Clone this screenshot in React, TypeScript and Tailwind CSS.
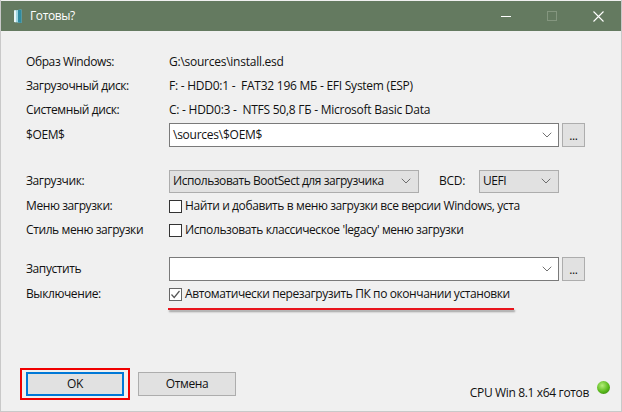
import { ChevronDown } from "lucide-react";
import type { ReactNode } from "react";

function Row({ label, height, children }: { label: string; height: string; children: ReactNode }) {
  return (
    <div className={`flex items-center ${height}`}>
      <span className="w-[143px] shrink-0 whitespace-nowrap">{label}</span>
      {children}
    </div>
  );
}

function Chevron() {
  return <ChevronDown className="h-4 w-4 text-[#555]" strokeWidth={1.25} />;
}

function Combo({ value }: { value?: string }) {
  return (
    <div className="flex h-[24px] w-[390px] items-center justify-between border border-[#7a7a7a] bg-white pr-[3px] pl-[3px]">
      <span className="tracking-[-0.25px]">{value}</span>
      <Chevron />
    </div>
  );
}

function Select({ value, width }: { value: string; width: string }) {
  return (
    <div className={`flex h-[23px] items-center justify-between border border-[#adadad] bg-[#e1e1e1] pr-[4px] pl-[3px] ${width}`}>
      <span className="tracking-[-0.45px] whitespace-nowrap">{value}</span>
      <Chevron />
    </div>
  );
}

function DotsButton() {
  return (
    <div className="ml-[3px] flex h-[24px] w-[23px] items-end justify-center border border-[#adadad] bg-[#e1e1e1] pb-[3px] leading-[14px]">
      ...
    </div>
  );
}

function Check({ text, checked }: { text: string; checked?: boolean }) {
  return (
    <div className="flex items-center gap-[3px] whitespace-nowrap">
      <div className={`flex h-[13px] w-[13px] items-center justify-center border bg-white ${checked ? "border-[#666]" : "border-[#333]"}`}>
        {checked && (
          <svg width="11" height="11" viewBox="0 0 11 11" fill="none">
            <path d="M1.5 5.5 L4.2 8.5 L9.5 2" stroke="#555" strokeWidth="1.2" />
          </svg>
        )}
      </div>
      <span>{text}</span>
    </div>
  );
}

export default function App() {
  return (
    <div className="relative flex h-[412px] w-[622px] flex-col overflow-hidden border-x border-b border-[#c9c9c9] bg-[#f0f0f0] text-[12px] text-[#111] [font-family:'Open_Sans','Noto_Sans',sans-serif] tracking-[-0.4px]">
      <div className="mt-px flex h-[30px] items-center justify-between bg-[#647a60] pl-[12px] text-white">
        <div className="flex items-center gap-[7px]">
          <svg width="10" height="15" viewBox="0 0 10 15">
            <path d="M1 1.5 L8.5 0.5 V14 L1 13 Z" fill="#9fd6e2" />
            <path d="M5 1 L8.5 0.5 V14 L5 13.5 Z" fill="#2f8aa0" />
            <path d="M1 1.5 L3 1.3 V13.3 L1 13 Z" fill="#e6f6f8" />
          </svg>
          <span>Готовы?</span>
        </div>
        <div className="flex items-center">
          <div className="flex w-[46px] justify-center">
            <div className="h-px w-[10px] bg-white" />
          </div>
          <div className="flex w-[46px] justify-center">
            <div className="h-[10px] w-[10px] border border-[#84967f]" />
          </div>
          <div className="flex w-[46px] justify-center">
            <svg width="11" height="11" viewBox="0 0 11 11">
              <path d="M0.5 0.5 L10.5 10.5 M10.5 0.5 L0.5 10.5" stroke="#fff" strokeWidth="1.1" />
            </svg>
          </div>
        </div>
      </div>

      <div className="flex flex-col pt-[19px] pl-[25px]">
        <Row label="Образ Windows:" height="h-[24px]">
          <span className="tracking-[-0.25px]">G:\sources\install.esd</span>
        </Row>
        <Row label="Загрузочный диск:" height="h-[24px]">
          <span className="tracking-[-0.25px] whitespace-pre">F: - HDD0:1 -  FAT32 196 МБ - EFI System (ESP)</span>
        </Row>
        <Row label="Системный диск:" height="h-[24px]">
          <span className="tracking-[-0.25px] whitespace-pre">C: - HDD0:3 -  NTFS 50,8 ГБ - Microsoft Basic Data</span>
        </Row>
        <div className="mt-px">
          <Row label="$OEM$" height="h-[24px]">
            <Combo value="\sources\$OEM$" />
            <DotsButton />
          </Row>
        </div>

        <div className="mt-[22px]">
          <Row label="Загрузчик:" height="h-[24px]">
            <Select value="Использовать BootSect для загрузчика" width="w-[250px]" />
            <span className="ml-[20px] w-[40px] tracking-[-0.25px]">BCD:</span>
            <Select value="UEFI" width="w-[80px]" />
          </Row>
        </div>
        <div className="mt-px">
          <Row label="Меню загрузки:" height="h-[24px]">
            <Check text="Найти и добавить в меню загрузки все версии Windows, уста" />
          </Row>
        </div>
        <Row label="Стиль меню загрузки" height="h-[24px]">
          <Check text="Использовать классическое 'legacy' меню загрузки" />
        </Row>

        <div className="mt-[15px]">
          <Row label="Запустить" height="h-[24px]">
            <Combo />
            <DotsButton />
          </Row>
        </div>
        <Row label="Выключение:" height="h-[26px]">
          <Check text="Автоматически перезагрузить ПК по окончании установки" checked />
        </Row>
      </div>

      <div className="mt-auto mb-[15px] flex items-end pr-[11px] pl-[25px]">
        <div className="relative flex h-[24px] w-[98px] items-center justify-center border-2 border-[#0078d7] bg-[#e1e1e1]">
          OK
          <div className="absolute -top-[6px] -right-[8px] -bottom-[6px] -left-[8px] border-2 border-[#f00000]" />
        </div>
        <div className="ml-[14px] flex h-[24px] w-[98px] items-center justify-center border border-[#adadad] bg-[#e1e1e1]">
          Отмена
        </div>
        <span className="mb-[-6px] ml-auto tracking-[-0.35px]">CPU Win 8.1 x64 готов</span>
        <div className="mb-[2px] ml-[8px] h-[13px] w-[13px] rounded-full bg-[radial-gradient(circle_at_40%_35%,#b5ee7a,#58b81a_55%,#2c6e10)]" />
      </div>

      <div className="absolute top-[308px] left-[167px] h-[2px] w-[346px] bg-[#e8141c] shadow-[1px_2px_2px_rgba(0,0,0,0.35)]" />
    </div>
  );
}
